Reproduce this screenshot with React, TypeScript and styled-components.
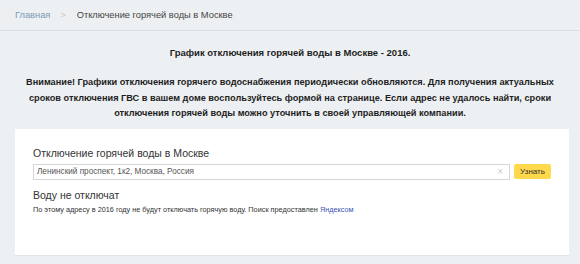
import React from "react";
import styled, { createGlobalStyle } from "styled-components";

const Global = createGlobalStyle`
  html, body { margin: 0; padding: 0; background: #edf0f2; }
  body { font-family: "Liberation Sans", Arial, sans-serif; color: #333; }
`;

const Page = styled.div`
  width: 580px;
  height: 264px;
  overflow: hidden;
  background: #edf0f2;
`;

const Breadcrumbs = styled.nav`
  height: 30px;
  display: flex;
  align-items: center;
  padding-left: 15px;
  border-bottom: 1px solid #dcdfe2;
  font-size: 9.3px;
  box-sizing: content-box;
`;

const Crumb = styled.a`
  color: #7b9ab3;
  text-decoration: none;
`;

const Sep = styled.span`
  color: #c4cbd0;
  margin: 0 11px 0 10px;
  font-size: 9px;
`;

const Current = styled.span`
  color: #444;
`;

const Intro = styled.div`
  padding: 15px 6px 0;
  text-align: center;
  font-weight: bold;
  color: #1e1e1e;
`;

const Title = styled.p`
  margin: 0 0 15px;
  font-size: 9.5px;
  line-height: 14px;
`;

const Notice = styled.p`
  margin: 0;
  font-size: 9.2px;
  line-height: 15.5px;
  white-space: nowrap;
`;

const Card = styled.section`
  margin: 7px 11px 0 15px;
  height: 127px;
  background: #fff;
  border-bottom: 1px solid #e2e4e6;
  padding: 17px 18px 0;
  box-sizing: border-box;
`;

const CardTitle = styled.h2`
  margin: 0;
  font-weight: normal;
  font-size: 10.5px;
  line-height: 14px;
  color: #333;
`;

const SearchRow = styled.div`
  display: flex;
  align-items: center;
  gap: 4px;
  margin-top: 4px;
`;

const InputBox = styled.div`
  width: 477px;
  height: 16px;
  box-sizing: border-box;
  border: 1px solid #d6d6d6;
  display: flex;
  align-items: center;
  justify-content: space-between;
  padding: 0 6px 0 3px;
  font-size: 8.2px;
  color: #555;
`;

const Clear = styled.span`
  color: #c8c8c8;
  font-size: 10px;
`;

const Button = styled.button`
  width: 37px;
  height: 15px;
  border: none;
  border-radius: 2px;
  background: #ffd84c;
  font-family: inherit;
  font-size: 8px;
  color: #333;
  padding: 0;
`;

const Result = styled.h3`
  margin: 9px 0 0;
  font-weight: normal;
  font-size: 10.5px;
  line-height: 13px;
  color: #333;
`;

const Note = styled.p`
  margin: 3px 0 0;
  font-size: 7.3px;
  line-height: 10px;
  color: #333;
`;

const Link = styled.a`
  color: #3a55b8;
  text-decoration: none;
`;

export default function App() {
  return (
    <Page>
      <Global />
      <Breadcrumbs>
        <Crumb href="#">Главная</Crumb>
        <Sep>&gt;</Sep>
        <Current>Отключение горячей воды в Москве</Current>
      </Breadcrumbs>
      <Intro>
        <Title>График отключения горячей воды в Москве - 2016.</Title>
        <Notice>
          Внимание! Графики отключения горячего водоснабжения периодически обновляются. Для получения актуальных
          <br />
          сроков отключения ГВС в вашем доме воспользуйтесь формой на странице. Если адрес не удалось найти, сроки
          <br />
          отключения горячей воды можно уточнить в своей управляющей компании.
        </Notice>
      </Intro>
      <Card>
        <CardTitle>Отключение горячей воды в Москве</CardTitle>
        <SearchRow>
          <InputBox>
            <span>Ленинский проспект, 1к2, Москва, Россия</span>
            <Clear>×</Clear>
          </InputBox>
          <Button>Узнать</Button>
        </SearchRow>
        <Result>Воду не отключат</Result>
        <Note>
          По этому адресу в 2016 году не будут отключать горячую воду. Поиск предоставлен <Link href="#">Яндексом</Link>
        </Note>
      </Card>
    </Page>
  );
}
